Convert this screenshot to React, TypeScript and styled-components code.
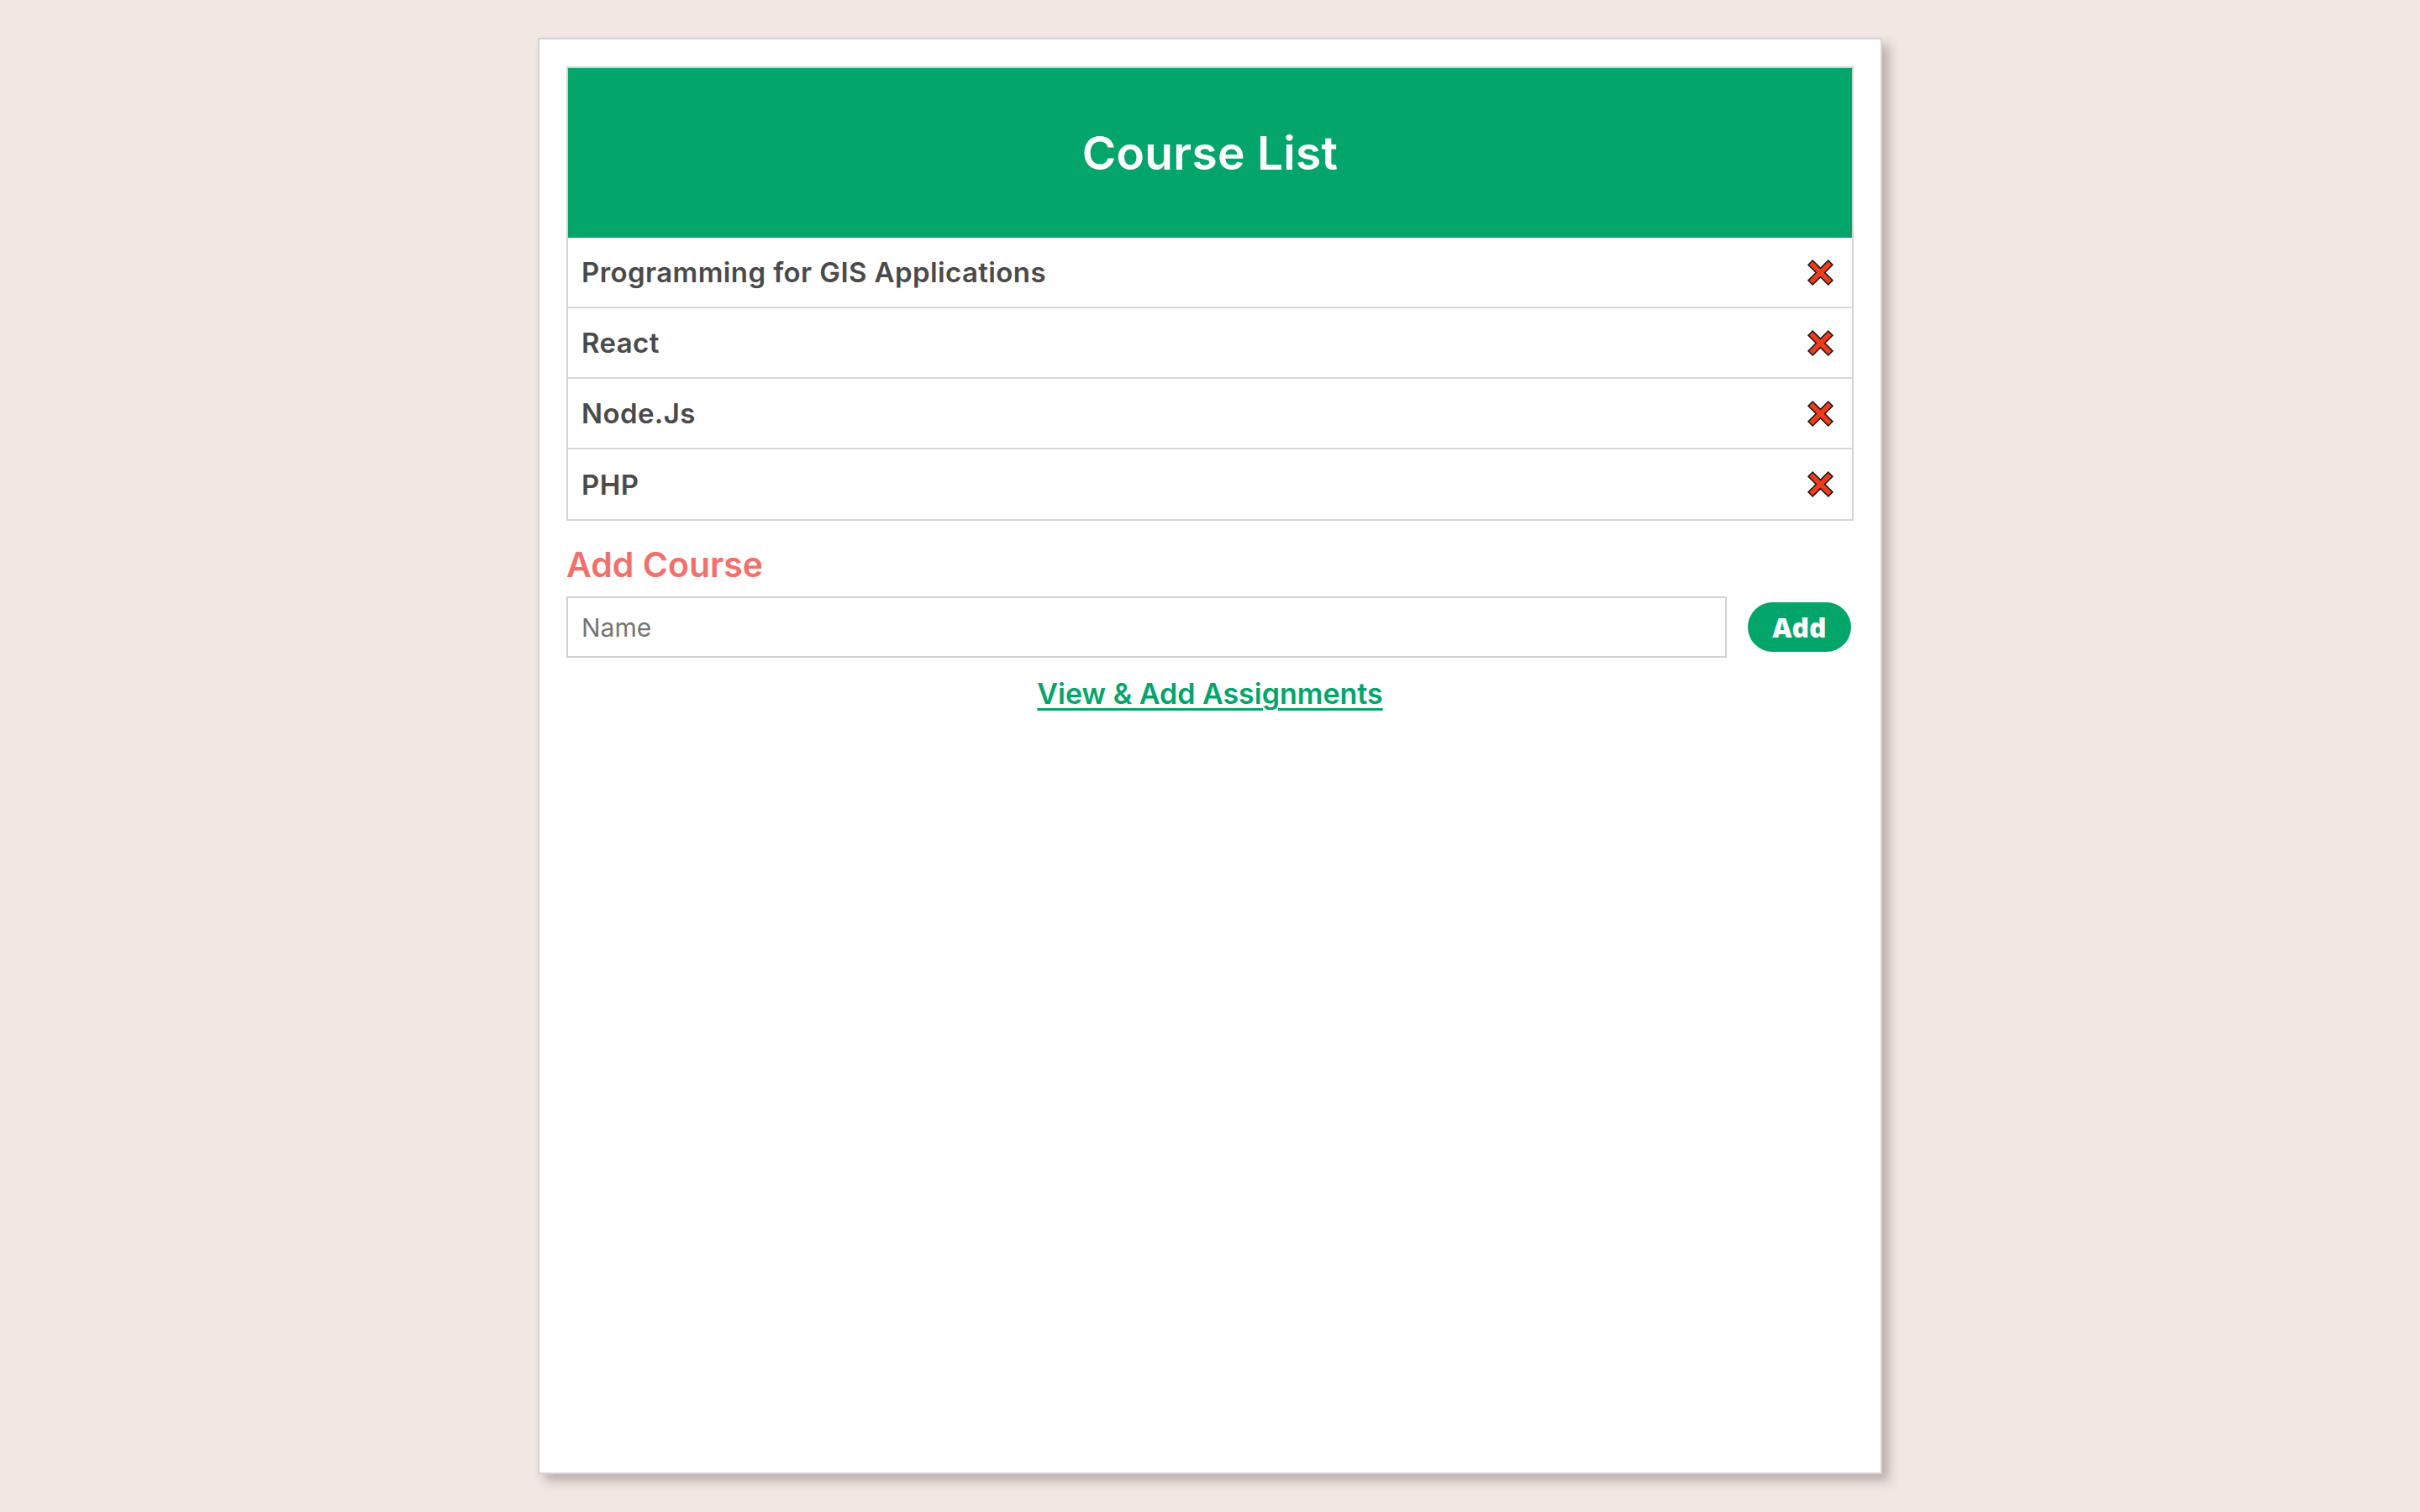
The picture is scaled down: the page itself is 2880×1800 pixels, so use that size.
import styled, { createGlobalStyle } from "styled-components";

const GlobalStyle = createGlobalStyle`
  * {
    box-sizing: border-box;
  }
  body {
    margin: 0;
    background-color: #f1e8e3;
    font-family: Inter, "Noto Sans", sans-serif;
  }
`;

const courses = ["Programming for GIS Applications", "React", "Node.Js", "PHP"];

function RemoveIcon() {
  return (
    <svg width="33" height="33" viewBox="0 0 32 32">
      <polygon
        points="2,7 7,2 16,11 25,2 30,7 21,16 30,25 25,30 16,21 7,30 2,25 11,16"
        fill="#ef3b1c"
        stroke="#151515"
        strokeWidth="1.5"
        strokeLinejoin="miter"
      />
    </svg>
  );
}

export default function App() {
  return (
    <Page>
      <GlobalStyle />
      <Card>
        <CourseTable>
          <Header>
            <h1>Course List</h1>
          </Header>
          {courses.map((c) => (
            <CourseRow key={c}>
              <span>{c}</span>
              <RemoveButton aria-label={`Remove ${c}`}>
                <RemoveIcon />
              </RemoveButton>
            </CourseRow>
          ))}
        </CourseTable>
        <SectionTitle>Add Course</SectionTitle>
        <AddForm>
          <NameInput placeholder="Name" />
          <AddButton>Add</AddButton>
        </AddForm>
        <LinkRow>
          <a href="#">View &amp; Add Assignments</a>
        </LinkRow>
      </Card>
    </Page>
  );
}

const Page = styled.div`
  min-height: 100vh;
  display: flex;
  justify-content: center;
  align-items: flex-start;
  padding-top: 45px;
`;

const Card = styled.div`
  width: 1600px;
  height: 95vh;
  background-color: #fff;
  border: 2px solid #d4d4d4;
  box-shadow: 8px 8px 12px rgba(60, 50, 45, 0.3);
  padding: 32px 32px;
`;

const CourseTable = styled.div`
  border: 2px solid #d6d6d6;
`;

const Header = styled.div`
  height: 202px;
  background-color: #04a56b;
  display: flex;
  align-items: center;
  justify-content: center;
  h1 {
    margin: 0;
    color: #fff;
    font-size: 55px;
    font-weight: 600;
    letter-spacing: 0.3px;
  }
`;

const CourseRow = styled.div`
  height: 84px;
  display: flex;
  align-items: center;
  justify-content: space-between;
  padding: 0 21px 0 16px;
  border-bottom: 2px solid #d9d9d9;
  &:last-child {
    border-bottom: none;
    height: 83px;
  }
  span {
    font-size: 33px;
    font-weight: 600;
    letter-spacing: 0.4px;
    color: #4a4a4a;
  }
`;

const RemoveButton = styled.button`
  border: none;
  background: none;
  padding: 0;
  display: flex;
  cursor: pointer;
`;

const SectionTitle = styled.h2`
  margin: 30px 0 15px;
  font-size: 41px;
  font-weight: 600;
  color: #f2706b;
  line-height: 1.1;
`;

const AddForm = styled.div`
  display: flex;
  align-items: center;
  gap: 25px;
`;

const NameInput = styled.input`
  flex: 1;
  height: 73px;
  border: 2px solid #d2d2d2;
  padding: 0 16px;
  font-size: 30px;
  font-family: Inter, "Noto Sans", sans-serif;
  outline: none;
  &::placeholder {
    color: #757575;
  }
`;

const AddButton = styled.button`
  width: 123px;
  height: 59px;
  margin-right: 3px;
  border: none;
  border-radius: 30px;
  background-color: #04a56b;
  color: #fff;
  font-family: "Open Sans", sans-serif;
  font-weight: 800;
  font-size: 32px;
  cursor: pointer;
`;

const LinkRow = styled.div`
  text-align: center;
  margin-top: 22px;
  a {
    color: #04a56b;
    font-size: 34px;
    font-weight: 600;
    text-underline-offset: 5px;
    text-decoration-thickness: 3px;
  }
`;
